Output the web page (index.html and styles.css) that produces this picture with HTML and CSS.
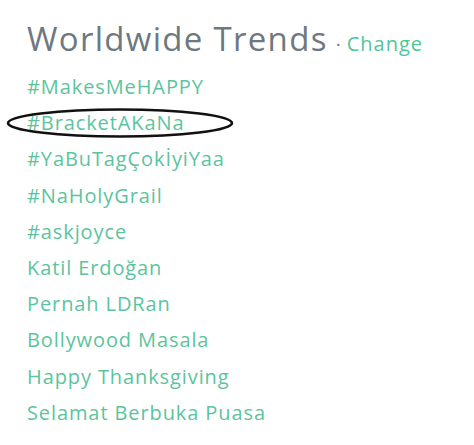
FILE: index.html
```html
<!DOCTYPE html>
<html>
<head>
<meta charset="utf-8">
<link rel="stylesheet" href="styles.css">
</head>
<body>
<div class="module">
  <div class="header">
    <h2 class="title">Worldwide Trends</h2>
    <span class="dot">·</span>
    <a class="change">Change</a>
  </div>
  <ul class="trends">
    <li><a>#MakesMeHAPPY</a></li>
    <li class="circled"><a>#BracketAKaNa</a>
      <svg class="ring" viewBox="0 0 230 32" width="230" height="32"><ellipse cx="115" cy="16" rx="112" ry="13.5" fill="none" stroke="#111" stroke-width="2.6"/></svg>
    </li>
    <li><a>#YaBuTagÇokİyiYaa</a></li>
    <li><a>#NaHolyGrail</a></li>
    <li><a>#askjoyce</a></li>
    <li><a>Katil Erdoğan</a></li>
    <li><a>Pernah LDRan</a></li>
    <li><a>Bollywood Masala</a></li>
    <li><a>Happy Thanksgiving</a></li>
    <li><a>Selamat Berbuka Puasa</a></li>
  </ul>
</div>
</body>
</html>
```

FILE: styles.css
```css
html, body {
  margin: 0;
  padding: 0;
  background: #fff;
}
body {
  font-family: "Open Sans", "DejaVu Sans", sans-serif;
}
.module {
  padding: 17px 0 0 27px;
}
.header {
  display: flex;
  align-items: baseline;
  height: 52px;
}
.title {
  margin: 0;
  font-size: 33px;
  font-weight: 400;
  color: #6e7880;
  line-height: 44px;
  letter-spacing: 1.3px;
}
.dot {
  color: #6e7880;
  font-size: 19px;
  margin: 0 6px 0 8px;
}
.change {
  color: #4fc59a;
  font-size: 20px;
  letter-spacing: 1px;
}
.trends {
  list-style: none;
  margin: 0;
  padding: 0;
}
.trends li {
  position: relative;
  height: 36.2px;
  line-height: 36px;
  font-size: 20px;
  letter-spacing: 0.9px;
  color: #5cc49d;
}
.ring {
  position: absolute;
  left: -22px;
  top: 2px;
}
```
